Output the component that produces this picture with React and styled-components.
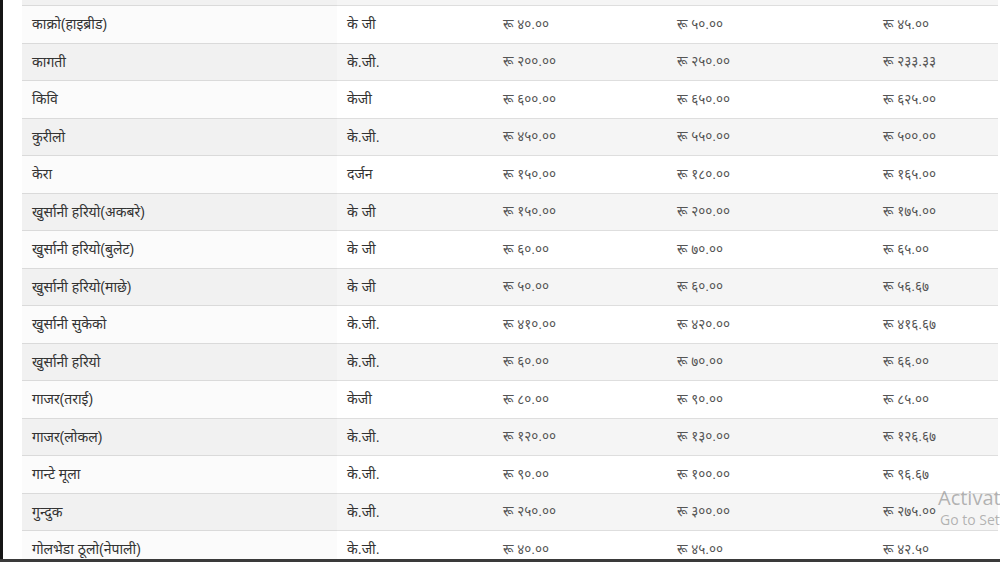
import React from 'react';
import styled, { createGlobalStyle } from 'styled-components';

const GlobalStyle = createGlobalStyle`
  html, body {
    margin: 0;
    padding: 0;
    background: #fff;
    overflow: hidden;
  }
  body {
    font-family: "Liberation Sans", "Noto Sans", sans-serif;
  }
`;

const Screen = styled.div`
  width: 1000px;
  height: 562px;
  display: flex;
  flex-direction: column;
  position: relative;
  overflow: hidden;
`;

const Main = styled.div`
  flex: 1;
  display: flex;
  min-height: 0;
`;

const EdgeBar = styled.div`
  width: 3px;
  background: #161616;
`;

const Gutter = styled.div`
  width: 19px;
  background: #fff;
`;

const TableArea = styled.div`
  flex: 1;
  overflow: hidden;
  padding-right: 2px;
`;

const Table = styled.div`
  margin-top: -32.5px;
  display: flex;
  flex-direction: column;
`;

const Row = styled.div`
  display: grid;
  grid-template-columns: 315px 156px 174px 206px 1fr;
  height: 37.5px;
  box-sizing: border-box;
  border-top: 1px solid #dedede;
  background: ${p => (p.$striped ? '#f5f5f5' : '#fff')};
`;

const Cell = styled.div`
  display: flex;
  align-items: center;
  padding: 0 10px;
  margin-top: -1px;
  font-size: ${p => (p.$price ? '13.5px' : '14px')};
  color: ${p => (p.$price ? '#555' : '#333')};
  white-space: nowrap;
  background: ${p => (p.$name ? 'rgba(0,0,0,0.015)' : 'transparent')};
`;

const BottomBar = styled.div`
  height: 3px;
  background: #3a3a3a;
`;

const Watermark = styled.div`
  position: absolute;
  left: ${p => p.$left}px;
  top: ${p => p.$top}px;
  font-family: "Open Sans", "Noto Sans", sans-serif;
  font-size: ${p => p.$size}px;
  color: rgba(120, 120, 120, 0.55);
  white-space: nowrap;
  pointer-events: none;
`;

const rows = [
  ['', '', '', '', ''],
  ['काक्रो(हाइब्रीड)', 'के जी', '४०.००', '५०.००', '४५.००'],
  ['कागती', 'के.जी.', '२००.००', '२५०.००', '२३३.३३'],
  ['किवि', 'केजी', '६००.००', '६५०.००', '६२५.००'],
  ['कुरीलो', 'के.जी.', '४५०.००', '५५०.००', '५००.००'],
  ['केरा', 'दर्जन', '१५०.००', '१८०.००', '१६५.००'],
  ['खुर्सानी हरियो(अकबरे)', 'के जी', '१५०.००', '२००.००', '१७५.००'],
  ['खुर्सानी हरियो(बुलेट)', 'के जी', '६०.००', '७०.००', '६५.००'],
  ['खुर्सानी हरियो(माछे)', 'के जी', '५०.००', '६०.००', '५६.६७'],
  ['खुर्सानी सुकेको', 'के.जी.', '४१०.००', '४२०.००', '४१६.६७'],
  ['खुर्सानी हरियो', 'के.जी.', '६०.००', '७०.००', '६६.००'],
  ['गाजर(तराई)', 'केजी', '८०.००', '९०.००', '८५.००'],
  ['गाजर(लोकल)', 'के.जी.', '१२०.००', '१३०.००', '१२६.६७'],
  ['गान्टे मूला', 'के.जी.', '९०.००', '१००.००', '९६.६७'],
  ['गुन्दुक', 'के.जी.', '२५०.००', '३००.००', '२७५.००'],
  ['गोलभेडा ठूलो(नेपाली)', 'के.जी.', '४०.००', '४५.००', '४२.५०'],
];

export default function App() {
  return (
    <Screen>
      <GlobalStyle />
      <Main>
        <EdgeBar />
        <Gutter />
        <TableArea>
          <Table>
            {rows.map((r, i) => (
              <Row key={i} $striped={i % 2 === 0}>
                <Cell $name>{r[0]}</Cell>
                <Cell>{r[1]}</Cell>
                {r.slice(2).map((v, j) => (
                  <Cell key={j} $price>{v ? `रू ${v}` : ''}</Cell>
                ))}
              </Row>
            ))}
          </Table>
        </TableArea>
      </Main>
      <BottomBar />
      <Watermark $left={938} $top={484} $size={20}>Activate Windows</Watermark>
      <Watermark $left={940} $top={510} $size={14}>Go to Settings to activate Windows.</Watermark>
    </Screen>
  );
}
